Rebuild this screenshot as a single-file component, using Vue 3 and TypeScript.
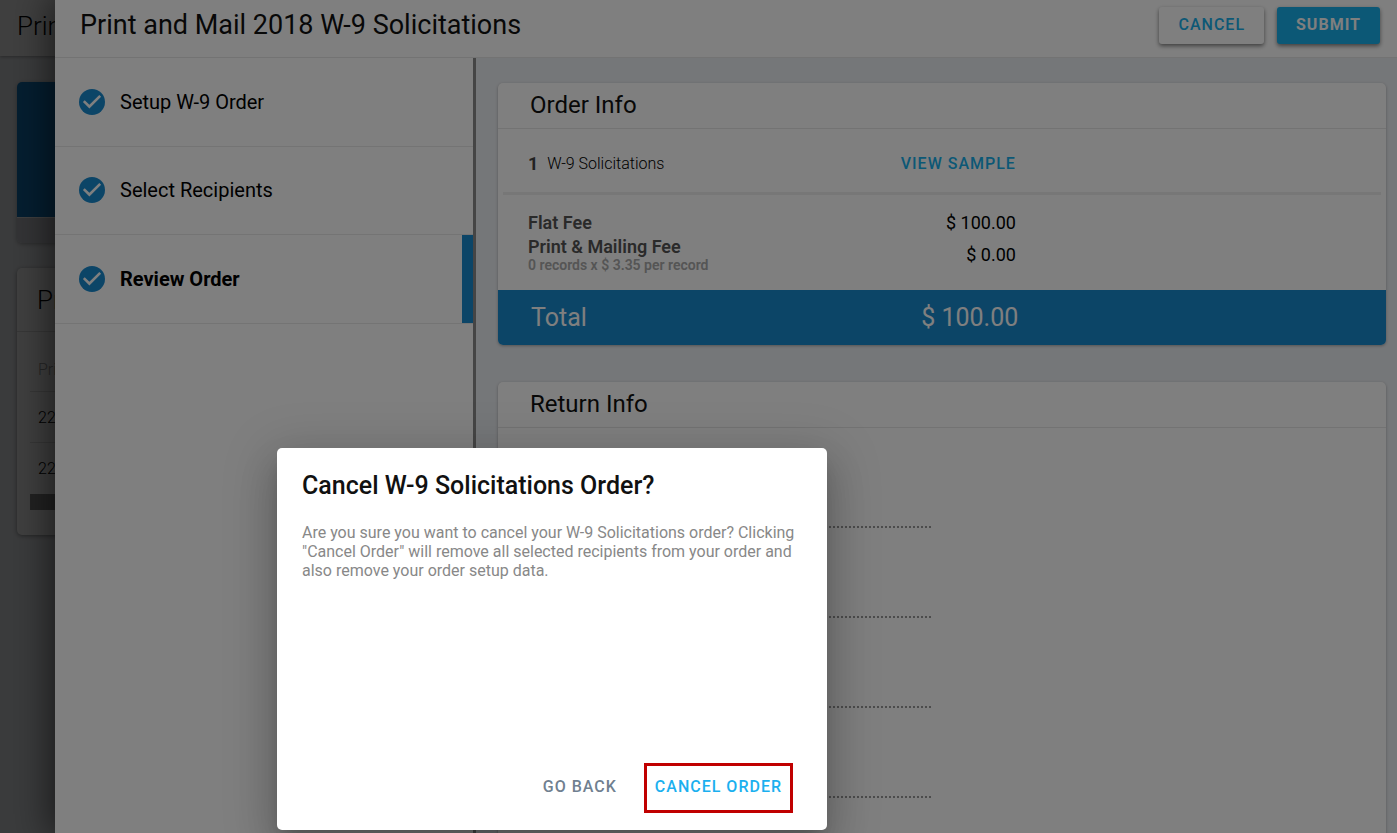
<script setup lang="ts">
interface Step {
  label: string
  active: boolean
}

const steps: Step[] = [
  { label: 'Setup W-9 Order', active: false },
  { label: 'Select Recipients', active: false },
  { label: 'Review Order', active: true },
]

const printRows: string[] = ['22', '22']
const returnFields: number[] = [1, 2, 3, 4]
</script>

<template>
  <div class="app">
    <div class="page" aria-hidden="true">
      <header class="page-bar">Print</header>
      <div class="page-body">
        <section class="banner">
          <div class="banner-art"></div>
          <div class="banner-foot"></div>
        </section>
        <section class="prints">
          <h2 class="prints-title">Print</h2>
          <div class="prints-list">
            <div class="prints-row prints-head">Print</div>
            <div v-for="(row, i) in printRows" :key="i" class="prints-row">{{ row }}</div>
            <div class="prints-scroll"></div>
          </div>
        </section>
      </div>
    </div>
    <div class="scrim"></div>

    <div class="drawer">
      <header class="drawer-bar">
        <h1 class="drawer-title">Print and Mail 2018 W-9 Solicitations</h1>
        <div class="drawer-actions">
          <button type="button" class="btn btn-plain">CANCEL</button>
          <button type="button" class="btn btn-fill">SUBMIT</button>
        </div>
      </header>
      <div class="drawer-body">
        <nav class="steps">
          <button
            v-for="step in steps"
            :key="step.label"
            type="button"
            class="step"
            :class="{ active: step.active }"
          >
            <svg class="check" viewBox="2 2 20 20" aria-hidden="true">
              <circle cx="12" cy="12" r="10" fill="#188acf" />
              <path d="M10 17l-5-5 1.41-1.41L10 14.17l7.59-7.59L19 8z" fill="#fff" />
            </svg>
            <span>{{ step.label }}</span>
          </button>
        </nav>
        <main class="content">
          <section class="card">
            <h2 class="card-title">Order Info</h2>
            <div class="order-line">
              <div class="split">
                <div class="item"><b>1</b><span>W-9 Solicitations</span></div>
                <a href="#" class="sample">VIEW SAMPLE</a>
              </div>
            </div>
            <div class="fees">
              <div class="split">
                <div class="fee-names">
                  <div class="fee">Flat Fee</div>
                  <div class="fee">Print &amp; Mailing Fee</div>
                  <div class="fee-note">0 records x $ 3.35 per record</div>
                </div>
                <div class="fee-values">
                  <div>$ 100.00</div>
                  <div>$ 0.00</div>
                </div>
              </div>
            </div>
            <div class="total">
              <div class="split">
                <span>Total</span>
                <span>$ 100.00</span>
              </div>
            </div>
          </section>
          <section class="card">
            <h2 class="card-title">Return Info</h2>
            <div class="fields">
              <div v-for="field in returnFields" :key="field" class="field"></div>
            </div>
          </section>
        </main>
      </div>
    </div>
    <div class="scrim"></div>

    <div class="dialog" role="dialog" aria-labelledby="dialog-title">
      <h2 id="dialog-title" class="dialog-title">Cancel W-9 Solicitations Order?</h2>
      <p class="dialog-text">
        Are you sure you want to cancel your W-9 Solicitations order? Clicking "Cancel Order" will
        remove all selected recipients from your order and also remove your order setup data.
      </p>
      <div class="dialog-actions">
        <button type="button" class="link-btn go-back">GO BACK</button>
        <button type="button" class="link-btn cancel-order">CANCEL ORDER</button>
      </div>
    </div>
  </div>
</template>

<style>
body {
  margin: 0;
}
</style>

<style scoped>
.app {
  position: relative;
  height: 100vh;
  overflow: hidden;
  background: #ebeef2;
  font-family: Roboto, 'Liberation Sans', sans-serif;
  color: #000;
}
.app * {
  box-sizing: border-box;
}
button {
  font-family: inherit;
  cursor: pointer;
}
h1,
h2,
p {
  margin: 0;
}
.scrim {
  position: absolute;
  inset: 0;
  background: rgba(0, 0, 0, 0.5);
}

/* page under the drawer */
.page-bar {
  height: 56px;
  padding-left: 17px;
  background: #fff;
  font-size: 26px;
  font-weight: 300;
  line-height: 52px;
  box-shadow: 0 1px 3px rgba(0, 0, 0, 0.3);
}
.page-body {
  padding: 26px 17px;
}
.banner {
  border-radius: 5px;
  overflow: hidden;
  box-shadow: 0 1px 4px rgba(0, 0, 0, 0.3);
}
.banner-art {
  height: 135px;
  background: #1278c0;
}
.banner-foot {
  height: 26px;
  border-top: 1px solid #fff;
  background: #cfd1d8;
}
.prints {
  margin-top: 25px;
  height: 267px;
  background: #fff;
  border-radius: 5px;
  box-shadow: 0 1px 4px rgba(0, 0, 0, 0.4);
}
.prints-title {
  height: 64px;
  padding-left: 20px;
  border-bottom: 1px solid #ddd;
  font-size: 26px;
  font-weight: 300;
  line-height: 64px;
}
.prints-list {
  padding: 9px 13px;
}
.prints-row {
  height: 51px;
  padding-left: 8px;
  border-bottom: 1px solid #ddd;
  font-size: 16px;
  font-weight: 300;
  line-height: 51px;
}
.prints-row:nth-last-child(2) {
  border-bottom: 0;
}
.prints-head {
  line-height: 58px;
  color: #999;
}
.prints-scroll {
  height: 16px;
  background: #888;
}

/* drawer */
.drawer {
  position: absolute;
  inset: 0 0 0 55px;
  display: flex;
  flex-direction: column;
  background: #fff;
  box-shadow: 0 0 36px 4px rgba(0, 0, 0, 0.6);
}
.drawer-bar {
  display: flex;
  justify-content: space-between;
  align-items: flex-start;
  height: 58px;
  flex: none;
  padding: 0 17px 0 25px;
  border-bottom: 1px solid #e6e6e6;
}
.drawer-title {
  font-size: 27px;
  font-weight: 400;
  line-height: 50px;
  color: #111;
}
.drawer-actions {
  display: flex;
  gap: 13px;
  padding-top: 7px;
}
.btn {
  height: 37px;
  padding: 0 19px 2px;
  border: 0;
  border-radius: 3px;
  font-size: 16px;
  font-weight: 500;
  line-height: 35px;
  letter-spacing: 1px;
  box-shadow: 0 2px 4px rgba(0, 0, 0, 0.5);
}
.btn-plain {
  background: #fff;
  color: #18b0ec;
}
.btn-fill {
  background: #18b0ec;
  color: #fff;
  font-weight: 700;
}
.drawer-body {
  flex: 1;
  min-height: 0;
  display: flex;
}
.steps {
  width: 421px;
  flex: none;
  padding-top: 1px;
  border-right: 3px solid #8a8a8a;
}
.step {
  display: flex;
  align-items: center;
  gap: 15px;
  width: 100%;
  height: 88px;
  padding: 0 0 1px 24px;
  border: 0;
  border-bottom: 1px solid #e8e8e8;
  background: transparent;
  font-size: 20px;
  color: #000;
}
.step.active {
  height: 89px;
  box-shadow: inset -11px 0 0 #188acf;
  font-weight: 700;
}
.check {
  width: 26px;
  height: 26px;
}
.content {
  flex: 1;
  min-width: 0;
  display: flex;
  flex-direction: column;
  gap: 37px;
  padding: 25px 11px 0 22px;
  overflow: hidden;
  background: #ebeef2;
}
.card {
  flex: none;
  background: #fff;
  border-radius: 5px;
  box-shadow: 0 1px 3px rgba(0, 0, 0, 0.3);
  overflow: hidden;
}
.card-title {
  height: 46px;
  padding-left: 32px;
  border-bottom: 1px solid #e6e6e6;
  font-size: 24px;
  font-weight: 400;
  line-height: 45px;
  color: #111;
}
.split {
  display: flex;
  justify-content: space-between;
}
.order-line {
  margin: 0 5px;
  border-bottom: 3px solid #eee;
}
.order-line .split {
  align-items: center;
  height: 63px;
  margin-left: -5px;
  width: calc(55% + 35px);
  padding: 6px 0 0 30px;
}
.item {
  display: flex;
  gap: 9px;
  align-items: center;
  font-size: 16px;
  font-weight: 300;
}
.item b {
  font-size: 18px;
  font-weight: 700;
  color: #444;
}
.sample {
  font-size: 16px;
  font-weight: 500;
  letter-spacing: 1px;
  color: #18b0ec;
  text-decoration: none;
}
.fees {
  height: 95px;
  padding: 16px 0 0 30px;
}
.fees .split {
  width: calc(55% + 16px);
}
.fee {
  font-size: 18px;
  font-weight: 600;
  line-height: 24px;
  color: #555;
}
.fee-note {
  font-size: 14px;
  font-weight: 600;
  line-height: 13px;
  color: #aaa;
}
.fee-values {
  font-size: 18px;
  line-height: 32px;
  margin-top: -4px;
  text-align: right;
}
.total {
  height: 55px;
  padding-left: 33px;
  background: #188acf;
  color: #fff;
  font-size: 25px;
  line-height: 55px;
}
.total .split {
  width: calc(55% + 17px);
}
.fields {
  height: 500px;
  padding-left: 32px;
}
.field {
  width: 401px;
  height: 90px;
  border-bottom: 2px dotted #999;
}
.field:first-child {
  height: 100px;
}

/* dialog */
.dialog {
  position: absolute;
  left: 277px;
  top: 448px;
  display: flex;
  flex-direction: column;
  width: 550px;
  height: 382px;
  padding: 18px 25px 17px;
  border-radius: 5px;
  background: #fff;
  box-shadow:
    0 11px 15px -7px rgba(0, 0, 0, 0.2),
    0 24px 38px 3px rgba(0, 0, 0, 0.14),
    0 9px 50px 10px rgba(0, 0, 0, 0.14);
}
.dialog-title {
  font-size: 25px;
  font-weight: 500;
  line-height: 39px;
  color: #111;
}
.dialog-text {
  margin-top: 18px;
  font-size: 16px;
  line-height: 19px;
  color: #888;
}
.dialog-actions {
  display: flex;
  justify-content: flex-end;
  gap: 16px;
  margin-top: auto;
  padding-right: 9px;
}
.link-btn {
  height: 50px;
  padding: 0 8px 4px;
  border: 3px solid transparent;
  background: transparent;
  font-size: 16px;
  font-weight: 500;
  letter-spacing: 1px;
}
.go-back {
  color: #708090;
}
.cancel-order {
  border-color: #c00000;
  color: #1bb0ef;
}
</style>
